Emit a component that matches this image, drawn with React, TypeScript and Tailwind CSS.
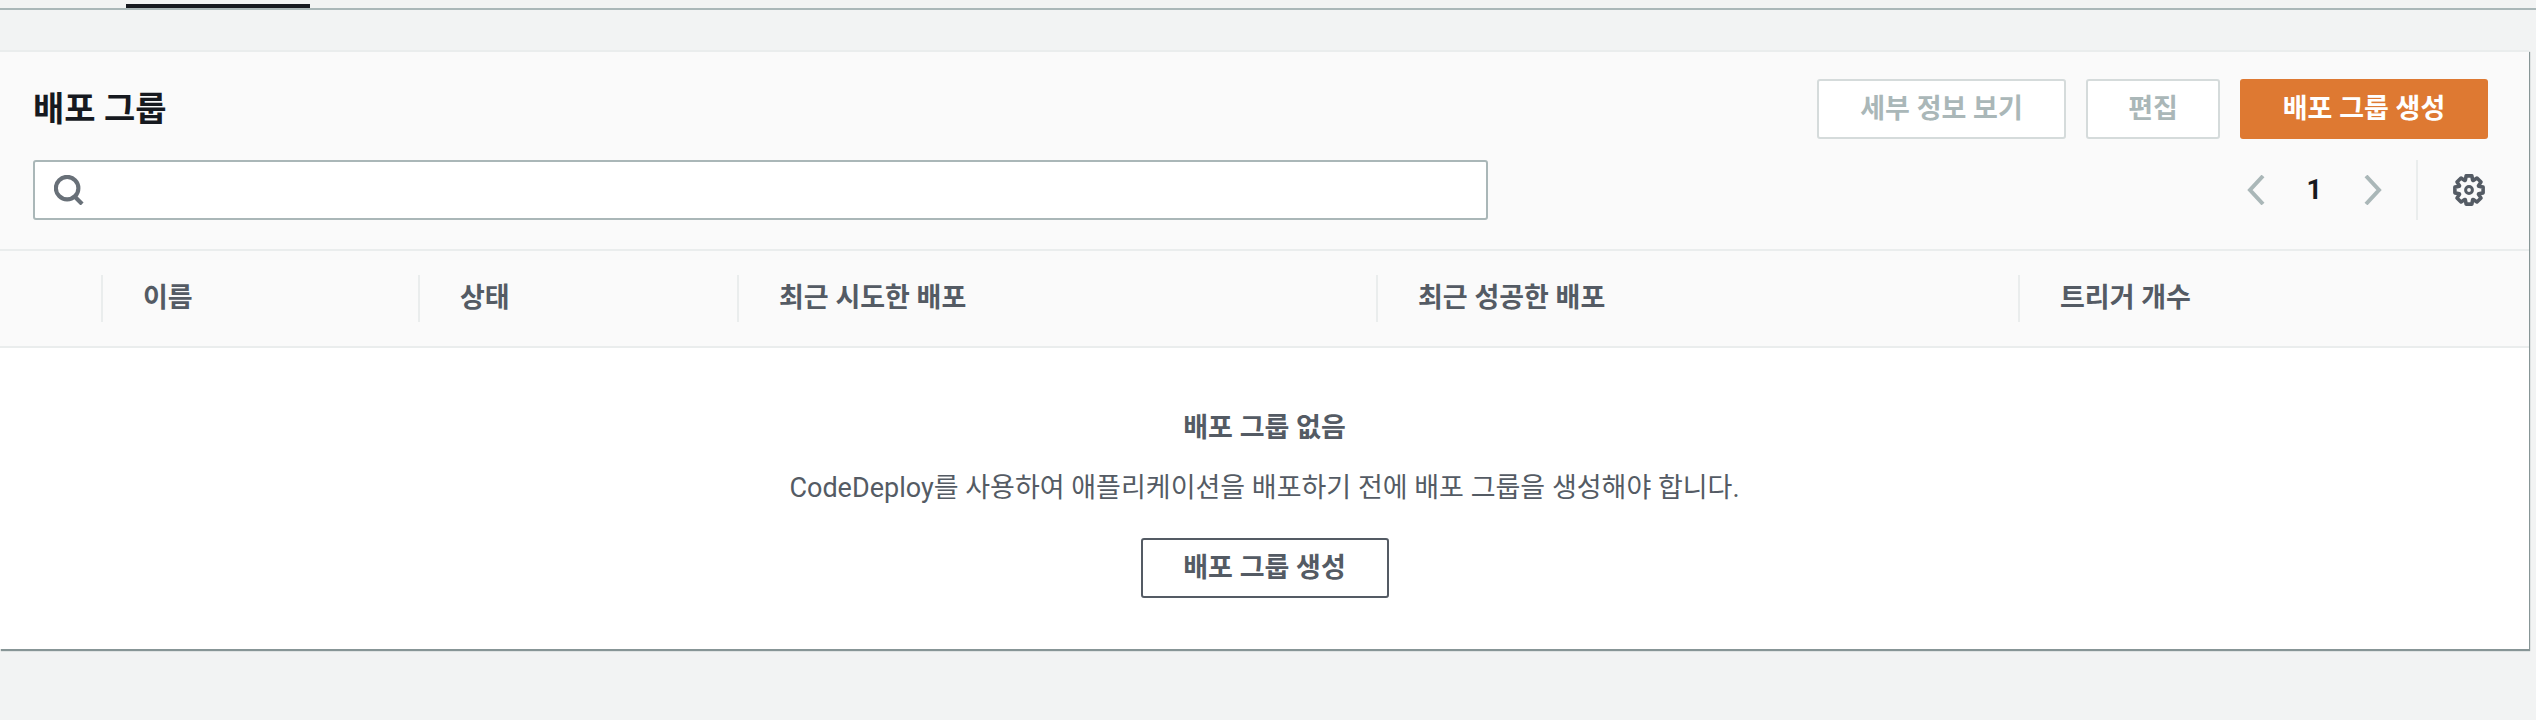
import React from 'react';

const FONT = "font-['Roboto','Noto_Sans_CJK_KR',sans-serif]";

const columns = [
  { label: '이름', width: 'w-[317px]' },
  { label: '상태', width: 'w-[319px]' },
  { label: '최근 시도한 배포', width: 'w-[639px]' },
  { label: '최근 성공한 배포', width: 'w-[642px]' },
  { label: '트리거 개수', width: 'flex-1' },
];

const SearchIcon = () => (
  <svg viewBox="0 0 16 16" className="w-[30px] h-[30px]" fill="none" stroke="#687078" strokeWidth="2.2">
    <circle cx="7" cy="7" r="6" />
    <path d="M11 11.5l4 4" />
  </svg>
);

const Chevron = ({ dir }: { dir: 'left' | 'right' }) => (
  <svg viewBox="0 0 18 30" className="w-[18px] h-[30px]" fill="none" stroke="#aab7b8" strokeWidth="4">
    <path d={dir === 'left' ? 'M16 1L3 15l13 14' : 'M2 1l13 14L2 29'} />
  </svg>
);

// 8 teeth gear outline
const gearPath = () => {
  const pts: string[] = [];
  for (let i = 0; i < 8; i++) {
    const a = (i * Math.PI) / 4 - Math.PI / 2;
    const s = 0.2;
    [
      [a - 0.36, 10.4],
      [a - s, 14.4],
      [a + s, 14.4],
      [a + 0.36, 10.4],
    ].forEach(([t, r]) => {
      pts.push(`${(16 + r * Math.cos(t)).toFixed(2)} ${(16 + r * Math.sin(t)).toFixed(2)}`);
    });
  }
  return `M${pts.join('L')}Z`;
};

const GearIcon = () => (
  <svg viewBox="0 0 32 32" className="w-[32px] h-[32px]" fill="none" stroke="#545b64" strokeWidth="3.6" strokeLinejoin="round">
    <path d={gearPath()} />
    <circle cx="16" cy="16" r="3.4" strokeWidth="3" />
  </svg>
);

const App: React.FC = () => {
  return (
    <div className={`${FONT} w-[2536px] h-[720px] bg-[#f2f3f3] overflow-hidden`}>
      {/* 탭 */}
      <div className="pt-1 pl-[126px] h-1 border-b-2 border-[#aab7b8] box-content">
        <div className="w-[184px] h-1 bg-[#16191f]" />
      </div>

      {/* 카드 */}
      <div className="mt-[40px] mr-[7px] bg-white border-t-2 border-[#eaeded] shadow-[1px_2px_1px_0_#879596]">
        <div className="bg-[#fafafa] border-b-2 border-[#eaeded] h-[199px] pl-[33px] pr-[41px] pt-[27px] flex justify-between">
          <div className="flex flex-col">
            <h2 className="text-[34px] leading-[60px] font-bold text-[#16191f]">배포 그룹</h2>
            <div className="mt-[21px] w-[1455px] h-[60px] bg-white border-2 border-[#aab7b8] rounded-[3px] flex items-center pl-[19px]">
              <SearchIcon />
            </div>
          </div>
          <div className="flex flex-col items-end">
            <div className="flex gap-[20px]">
              <button className="w-[249px] h-[60px] bg-white border-2 border-[#d5dbdb] rounded-[3px] text-[27px] font-bold text-[#aab7b8]">세부 정보 보기</button>
              <button className="w-[134px] h-[60px] bg-white border-2 border-[#d5dbdb] rounded-[3px] text-[27px] font-bold text-[#aab7b8]">편집</button>
              <button className="w-[248px] h-[60px] bg-[#de7932] rounded-[3px] text-[27px] font-bold text-white">배포 그룹 생성</button>
            </div>
            <div className="mt-[21px] pr-[3px] h-[60px] flex items-center">
              <Chevron dir="left" />
              <span className="mx-[42px] text-[27px] font-bold text-[#16191f]">1</span>
              <Chevron dir="right" />
              <div className="ml-[34px] w-[2px] h-[60px] bg-[#eaeded]" />
              <div className="ml-[35px]">
                <GearIcon />
              </div>
            </div>
          </div>
        </div>

        {/* 테이블 헤더 */}
        <div className="bg-[#fafafa] border-b-2 border-[#eaeded] h-[97px] pl-[101px] flex items-center">
          {columns.map((col) => (
            <div key={col.label} className={`${col.width} h-[47px] border-l-2 border-[#eaeded] pl-[40px] flex items-center text-[27px] font-bold text-[#545b64]`}>
              {col.label}
            </div>
          ))}
        </div>

        {/* 빈 상태 */}
        <div className="h-[301px] flex flex-col items-center text-[#545b64]">
          <p className="mt-[62px] leading-[36px] text-[27px] font-bold">배포 그룹 없음</p>
          <p className="mt-[24px] leading-[36px] text-[27px]">CodeDeploy를 사용하여 애플리케이션을 배포하기 전에 배포 그룹을 생성해야 합니다.</p>
          <button className="mt-[32px] w-[248px] h-[60px] bg-white border-2 border-[#545b64] rounded-[3px] text-[27px] font-bold">배포 그룹 생성</button>
        </div>
      </div>
    </div>
  );
};

export default App;
